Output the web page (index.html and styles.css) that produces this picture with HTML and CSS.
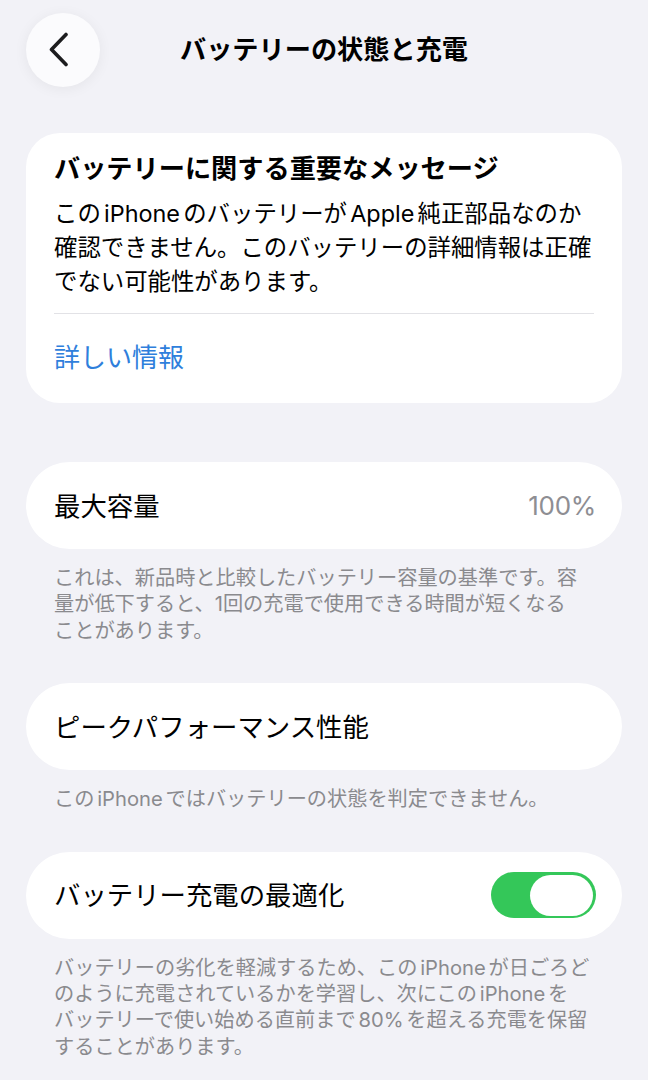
FILE: index.html
```html
<!DOCTYPE html>
<html lang="ja">
<head>
<meta charset="utf-8">
<title>バッテリーの状態と充電</title>
<link rel="stylesheet" href="styles.css">
</head>
<body>
<div class="page">
  <header class="nav">
    <button class="back" aria-label="戻る">
      <svg width="30" height="36" viewBox="0 0 30 36" aria-hidden="true">
        <path d="M20 2.5 L5.5 17.5 L20 32.5" fill="none" stroke="#1c1c1e" stroke-width="3.6" stroke-linecap="round" stroke-linejoin="round"/>
      </svg>
    </button>
    <h1 class="title">バッテリーの状態と充電</h1>
    <div class="spacer"></div>
  </header>

  <section class="card notice">
    <h2 class="notice-head">バッテリーに関する重要なメッセージ</h2>
    <p class="notice-body">この<span class="lat">iPhone</span>のバッテリーが<span class="lat">Apple</span>純正部品なのか<br>確認できません。このバッテリーの詳細情報は正確<br>でない可能性があります。</p>
    <div class="divider"></div>
    <a class="link" href="#">詳しい情報</a>
  </section>

  <section class="group first">
    <div class="card row">
      <span class="label">最大容量</span>
      <span class="value">100%</span>
    </div>
    <p class="foot">これは、新品時と比較したバッテリー容量の基準です。容<br>量が低下すると、1回の充電で使用できる時間が短くなる<br>ことがあります。</p>
  </section>

  <section class="group">
    <div class="card row">
      <span class="label">ピークパフォーマンス性能</span>
    </div>
    <p class="foot">この<span class="lat">iPhone</span>ではバッテリーの状態を判定できません。</p>
  </section>

  <section class="group">
    <div class="card row">
      <span class="label">バッテリー充電の最適化</span>
      <span class="toggle on"><span class="knob"></span></span>
    </div>
    <p class="foot">バッテリーの劣化を軽減するため、この<span class="lat">iPhone</span>が日ごろど<br>のように充電されているかを学習し、次にこの<span class="lat">iPhone</span>を<br>バッテリーで使い始める直前まで<span class="lat">80%</span>を超える充電を保留<br>することがあります。</p>
  </section>
</div>
</body>
</html>
```

FILE: styles.css
```css
* { box-sizing: border-box; }

html, body {
  margin: 0;
  padding: 0;
  background: #f2f2f7;
}

body {
  font-family: "Inter", "Noto Sans CJK JP", sans-serif;
  color: #000;
  width: 648px;
  height: 1080px;
  overflow: hidden;
}

.page {
  padding: 13px 26px 0;
}

.nav {
  display: grid;
  grid-template-columns: 74px 1fr 74px;
  align-items: center;
  height: 74px;
}

.back {
  width: 74px;
  height: 74px;
  border-radius: 50%;
  border: none;
  background: #fbfbfd;
  box-shadow: 0 2px 14px rgba(0, 0, 0, 0.06);
  display: flex;
  align-items: center;
  justify-content: center;
  padding: 0 4px 0 0;
}

.title {
  margin: 0;
  text-align: center;
  font-size: 26.2px;
  font-weight: 700;
  line-height: 34px;
  letter-spacing: 0;
}

.card {
  background: #fff;
}

.notice {
  margin-top: 46px;
  border-radius: 34px;
  padding: 19px 28px 28px;
  display: flex;
  flex-direction: column;
}

.notice-head {
  margin: 0 0 11px;
  font-size: 26.2px;
  font-weight: 700;
  line-height: 34px;
  white-space: nowrap;
}

.notice-body {
  margin: 0;
  font-size: 23.4px;
  line-height: 34px;
  white-space: nowrap;
}

.lat {
  margin: 0 0.14em;
}

.divider {
  height: 1px;
  background: #e2e2e6;
  margin: 14px 0 27px;
}

.link {
  color: #2f7fdc;
  text-decoration: none;
  font-size: 26px;
  line-height: 34px;
}

.group {
  margin-top: 39px;
}

.group.first {
  margin-top: 59px;
}

.row {
  height: 87px;
  border-radius: 44px;
  padding: 0 26px 0 28px;
  display: flex;
  align-items: center;
  justify-content: space-between;
}

.label {
  font-size: 26.4px;
  line-height: 34px;
}

.value {
  font-size: 26px;
  color: #8e8e93;
  font-weight: 400;
  letter-spacing: -0.3px;
}

.toggle {
  width: 105px;
  height: 46px;
  border-radius: 23px;
  background: #34c759;
  display: flex;
  align-items: center;
  justify-content: flex-end;
  padding: 0 3px;
}

.knob {
  width: 63px;
  height: 41px;
  border-radius: 21px;
  background: #fff;
}

.foot {
  margin: 16px 0 0;
  padding-left: 28px;
  font-size: 20.2px;
  line-height: 26.4px;
  color: #8a8a8e;
  white-space: nowrap;
}
```
